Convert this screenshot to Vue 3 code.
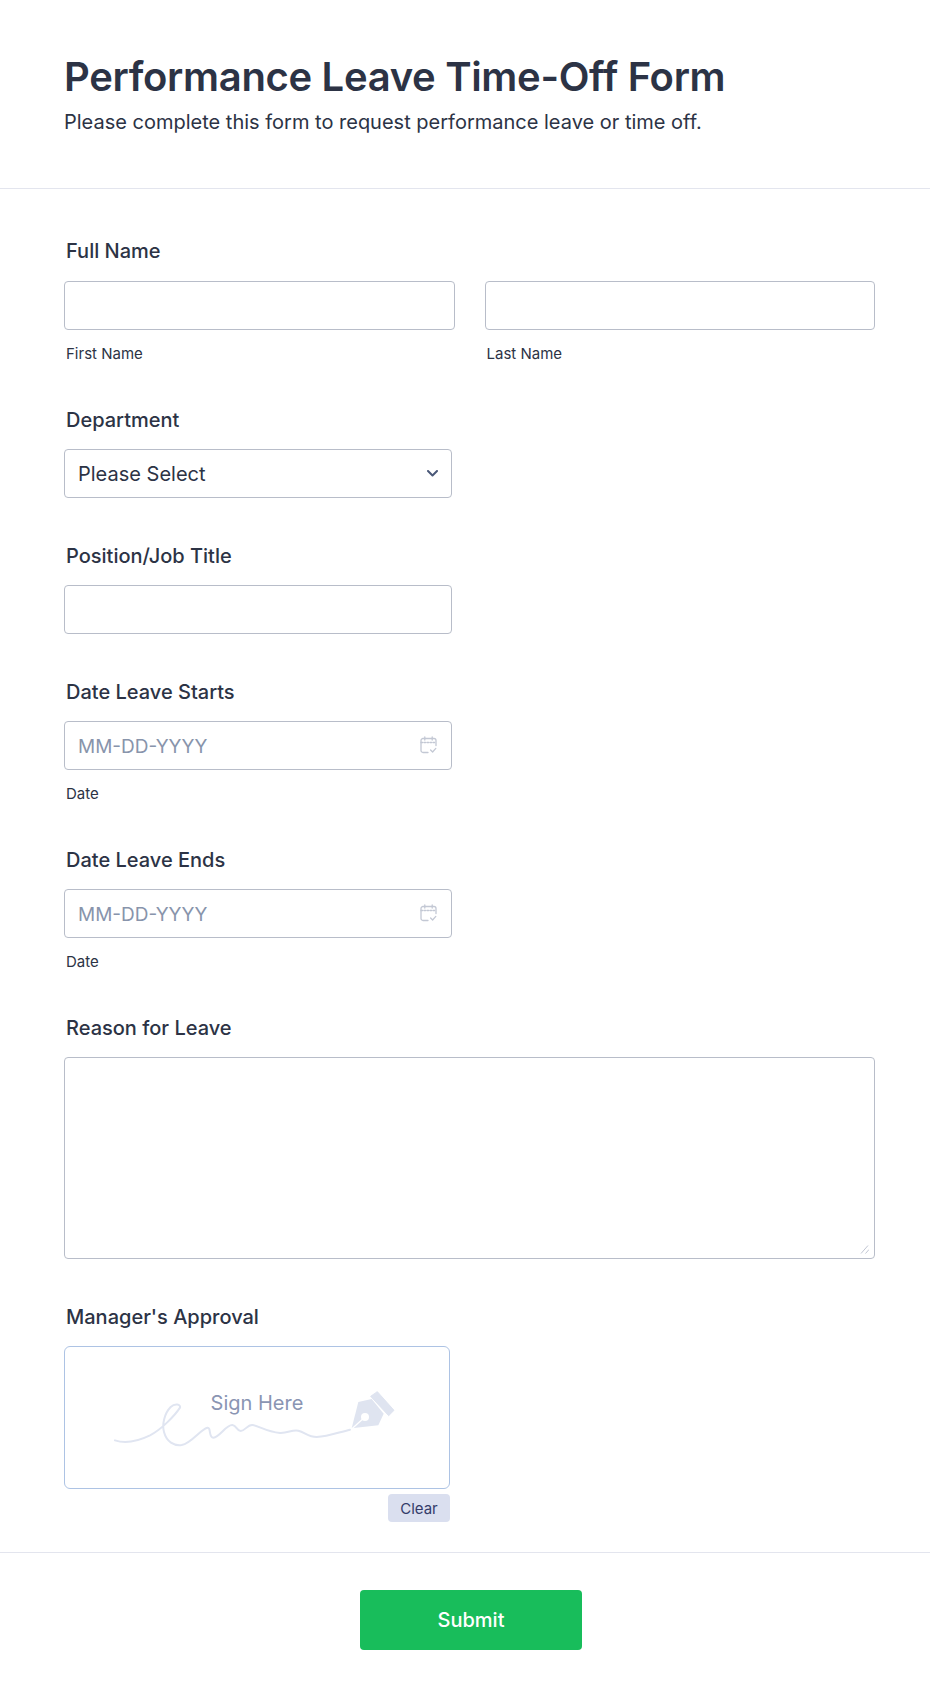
<script setup>
const dateFields = [
  { id: 'start', label: 'Date Leave Starts' },
  { id: 'end', label: 'Date Leave Ends' }
]
</script>

<template>
  <div class="page">
    <header class="form-header">
      <h1>Performance Leave Time-Off Form</h1>
      <p>Please complete this form to request performance leave or time off.</p>
    </header>

    <form class="form-body" @submit.prevent>
      <div class="field">
        <label class="field-label label-tall">Full Name</label>
        <div class="name-row">
          <div>
            <input class="text-input" type="text" />
            <div class="sub-label">First Name</div>
          </div>
          <div>
            <input class="text-input" type="text" />
            <div class="sub-label">Last Name</div>
          </div>
        </div>
      </div>

      <div class="field">
        <label class="field-label">Department</label>
        <div class="input-wrap">
          <select class="text-input select-input">
            <option>Please Select</option>
          </select>
          <svg class="chevron" width="11" height="7" viewBox="0 0 11 7" fill="none">
            <path d="M1 1l4.5 4.5L10 1" stroke="#4a5878" stroke-width="2" stroke-linecap="round" stroke-linejoin="round" />
          </svg>
        </div>
      </div>

      <div class="field">
        <label class="field-label">Position/Job Title</label>
        <div class="input-wrap">
          <input class="text-input" type="text" />
        </div>
      </div>

      <div class="field" v-for="item in dateFields" :key="item.id">
        <label class="field-label">{{ item.label }}</label>
        <div class="input-wrap">
          <input class="text-input date-input" type="text" placeholder="MM-DD-YYYY" />
          <svg class="calendar" width="17" height="18" viewBox="0 0 17 18" fill="none" stroke="#c3c8d4" stroke-width="1.3" stroke-linecap="round" stroke-linejoin="round">
            <path d="M8 16.5H3a2 2 0 0 1-2-2V4.5a2 2 0 0 1 2-2h11a2 2 0 0 1 2 2v5" />
            <path d="M1 6.5h15" stroke-dasharray="1.6 1.4" />
            <path d="M4.8 1v3M12.2 1v3" />
            <path d="M10.6 14l2 2 3.2-3.6" />
          </svg>
        </div>
        <div class="sub-label">Date</div>
      </div>

      <div class="field">
        <label class="field-label">Reason for Leave</label>
        <div class="area-wrap">
          <textarea class="text-area"></textarea>
          <svg class="resizer" width="9" height="10" viewBox="0 0 9 10" fill="none" stroke="#c0c5d2" stroke-width="1">
            <path d="M1 9.5L8 1.5M5.5 9.5L9 5.5" />
          </svg>
        </div>
      </div>

      <div class="field field-last">
        <label class="field-label">Manager's Approval</label>
        <div class="signature">
          <svg class="signature-art" width="386" height="143" viewBox="42 47 1158 429" fill="none">
            <path d="M195 330C225 340 265 332 300 315C335 297 375 255 390 232C393 222 375 218 362 230C342 250 336 285 342 305C350 335 372 347 395 344C425 338 450 298 472 292C484 290 475 322 490 322C510 320 528 283 547 284C560 285 560 302 572 302C585 302 592 283 607 284C625 286 650 305 690 308C715 309 725 297 745 301C765 306 775 320 800 320C835 318 865 306 900 298" stroke="#e0e5f1" stroke-width="6" stroke-linecap="round" />
            <path d="M925 215L965 206L1001 250L985 285L905 294Z" fill="#dfe4f0" />
            <circle cx="945" cy="260" r="12" fill="#fff" />
            <path d="M945 260L905 296" stroke="#fff" stroke-width="4" />
            <path d="M982 184L1032 240L1016 256L962 198Z" fill="#dfe4f0" stroke="#dfe4f0" stroke-width="3" stroke-linejoin="round" />
          </svg>
          <span class="sign-text">Sign Here</span>
        </div>
        <div class="clear-row">
          <button class="clear-btn" type="button">Clear</button>
        </div>
      </div>
    </form>

    <footer class="form-footer">
      <button class="submit-btn" type="submit">Submit</button>
    </footer>
  </div>
</template>

<style>
html, body {
  margin: 0;
  background: #fff;
}
</style>

<style scoped>
.page {
  font-family: Inter, "Liberation Sans", sans-serif;
  color: #2c3345;
  background: #fff;
  height: 1699px;
  box-sizing: border-box;
}

.form-header {
  padding: 53px 55px 54px 64px;
  border-bottom: 1px solid #e3e5ee;
}

.form-header h1 {
  margin: 0;
  font-size: 40px;
  line-height: 48px;
  font-weight: 600;
  letter-spacing: -0.32px;
}

.form-header p {
  margin: 9px 0 0;
  font-size: 20px;
  line-height: 24px;
}

.form-body {
  padding: 50px 55px 0 64px;
}

.field {
  margin-bottom: 46px;
}

.field-last {
  margin-bottom: 0;
}

.field-label {
  display: block;
  padding-left: 2px;
  margin-bottom: 17px;
  font-size: 20px;
  line-height: 24px;
  font-weight: 500;
}

.label-tall {
  margin-bottom: 18px;
}

.name-row {
  display: grid;
  grid-template-columns: 1fr 1fr;
  gap: 30px;
}

.input-wrap {
  position: relative;
  width: 388px;
}

.text-input {
  display: block;
  width: 100%;
  height: 49px;
  box-sizing: border-box;
  padding: 0 13px;
  border: 1px solid #b8bdc9;
  border-radius: 4px;
  background: #fff;
  font-family: inherit;
  font-size: 20px;
  color: #2c3345;
  outline: none;
}

.date-input {
  padding-top: 1px;
  font-size: 19px;
}

.text-input::placeholder {
  color: #8894ab;
  opacity: 1;
}

.select-input {
  appearance: none;
}

.chevron {
  position: absolute;
  right: 14px;
  top: 21px;
}

.calendar {
  position: absolute;
  right: 15px;
  top: 15px;
}

.sub-label {
  padding-left: 2px;
  margin-top: 15px;
  font-size: 15px;
  line-height: 17px;
}

.area-wrap {
  position: relative;
}

.text-area {
  display: block;
  width: 100%;
  height: 202px;
  box-sizing: border-box;
  border: 1px solid #b8bdc9;
  border-radius: 4px;
  outline: none;
  background: #fff;
  resize: none;
}

.resizer {
  position: absolute;
  right: 6px;
  bottom: 5px;
}

.signature {
  position: relative;
  width: 386px;
  height: 143px;
  box-sizing: border-box;
  border: 1px solid #adc3e4;
  border-radius: 6px;
  overflow: hidden;
}

.signature-art {
  position: absolute;
  left: -1px;
  top: -1px;
}

.sign-text {
  position: absolute;
  left: 0;
  right: 0;
  top: 44px;
  text-align: center;
  font-size: 20px;
  line-height: 24px;
  color: #8a95b3;
}

.clear-row {
  display: flex;
  justify-content: flex-end;
  width: 386px;
  margin-top: 5px;
}

.clear-btn {
  width: 62px;
  height: 28px;
  padding: 0;
  border: 0;
  border-radius: 4px;
  background: #dadfef;
  font-family: inherit;
  font-size: 15px;
  color: #343c6a;
}

.form-footer {
  display: flex;
  justify-content: center;
  margin-top: 30px;
  padding: 37px 55px 0 67px;
  border-top: 1px solid #e3e5ee;
}

.submit-btn {
  width: 222px;
  height: 60px;
  border: 0;
  border-radius: 4px;
  background: #18bd5b;
  font-family: inherit;
  font-size: 20px;
  font-weight: 500;
  color: #fff;
}
</style>
